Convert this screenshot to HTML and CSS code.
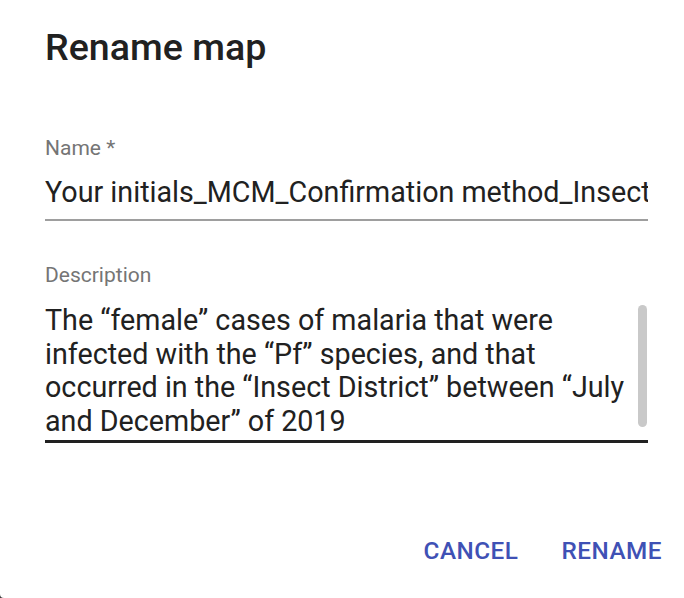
FILE: index.html
```html
<!DOCTYPE html>
<html>
<head>
<meta charset="utf-8">
<link rel="stylesheet" href="styles.css">
</head>
<body>
<div class="dialog">
  <h1 class="title">Rename map</h1>
  <div class="field field-name">
    <label class="label">Name *</label>
    <div class="input">Your initials_MCM_Confirmation method_Insect District_Female_Pf</div>
  </div>
  <div class="field field-desc">
    <label class="label">Description</label>
    <div class="textarea">
      <div class="textarea-text">The “female” cases of malaria that were<br>infected with the “Pf” species, and that<br>occurred in the “Insect District” between “July<br>and December” of 2019</div>
      <div class="scrollbar"></div>
    </div>
  </div>
  <div class="actions">
    <button class="btn">CANCEL</button>
    <button class="btn">RENAME</button>
  </div>
</div>
</body>
</html>
```

FILE: styles.css
```css
html, body {
  margin: 0;
  padding: 0;
  background: #3a3a3a;
}
.dialog {
  width: 684px;
  height: 598px;
  box-sizing: border-box;
  background: #ffffff;
  border-bottom-left-radius: 4px;
  padding: 25px 22px 0 45px;
  font-family: Roboto, "Liberation Sans", sans-serif;
  color: #212121;
  display: flex;
  flex-direction: column;
}
.title {
  margin: 0;
  font-size: 37.6px;
  font-weight: 500;
  line-height: 44px;
  color: #212121;
}
.field {
  display: flex;
  flex-direction: column;
  width: 603px;
}
.field-name {
  margin-top: 67px;
}
.label {
  font-size: 21px;
  line-height: 24px;
  color: #757575;
}
.input {
  margin-top: 15px;
  font-size: 28.7px;
  line-height: 34px;
  white-space: nowrap;
  overflow: hidden;
  padding-bottom: 10px;
  border-bottom: 2px solid #9e9e9e;
}
.field-desc {
  margin-top: 42px;
}
.textarea {
  position: relative;
  margin-top: 17px;
  border-bottom: 3px solid #212121;
  padding-bottom: 1.5px;
}
.textarea-text {
  font-size: 28.7px;
  line-height: 33.7px;
}
.scrollbar {
  position: absolute;
  right: 1px;
  top: 1px;
  width: 9px;
  height: 122px;
  border-radius: 5px;
  background: #c9c9c9;
}
.actions {
  display: flex;
  justify-content: flex-end;
  gap: 43px;
  margin-top: 94px;
}
.btn {
  background: none;
  border: none;
  padding: 0;
  font-family: Roboto, "Liberation Sans", sans-serif;
  font-weight: 500;
  font-size: 24.3px;
  letter-spacing: 0.5px;
  line-height: 28px;
  color: #3f51b5;
}
```
